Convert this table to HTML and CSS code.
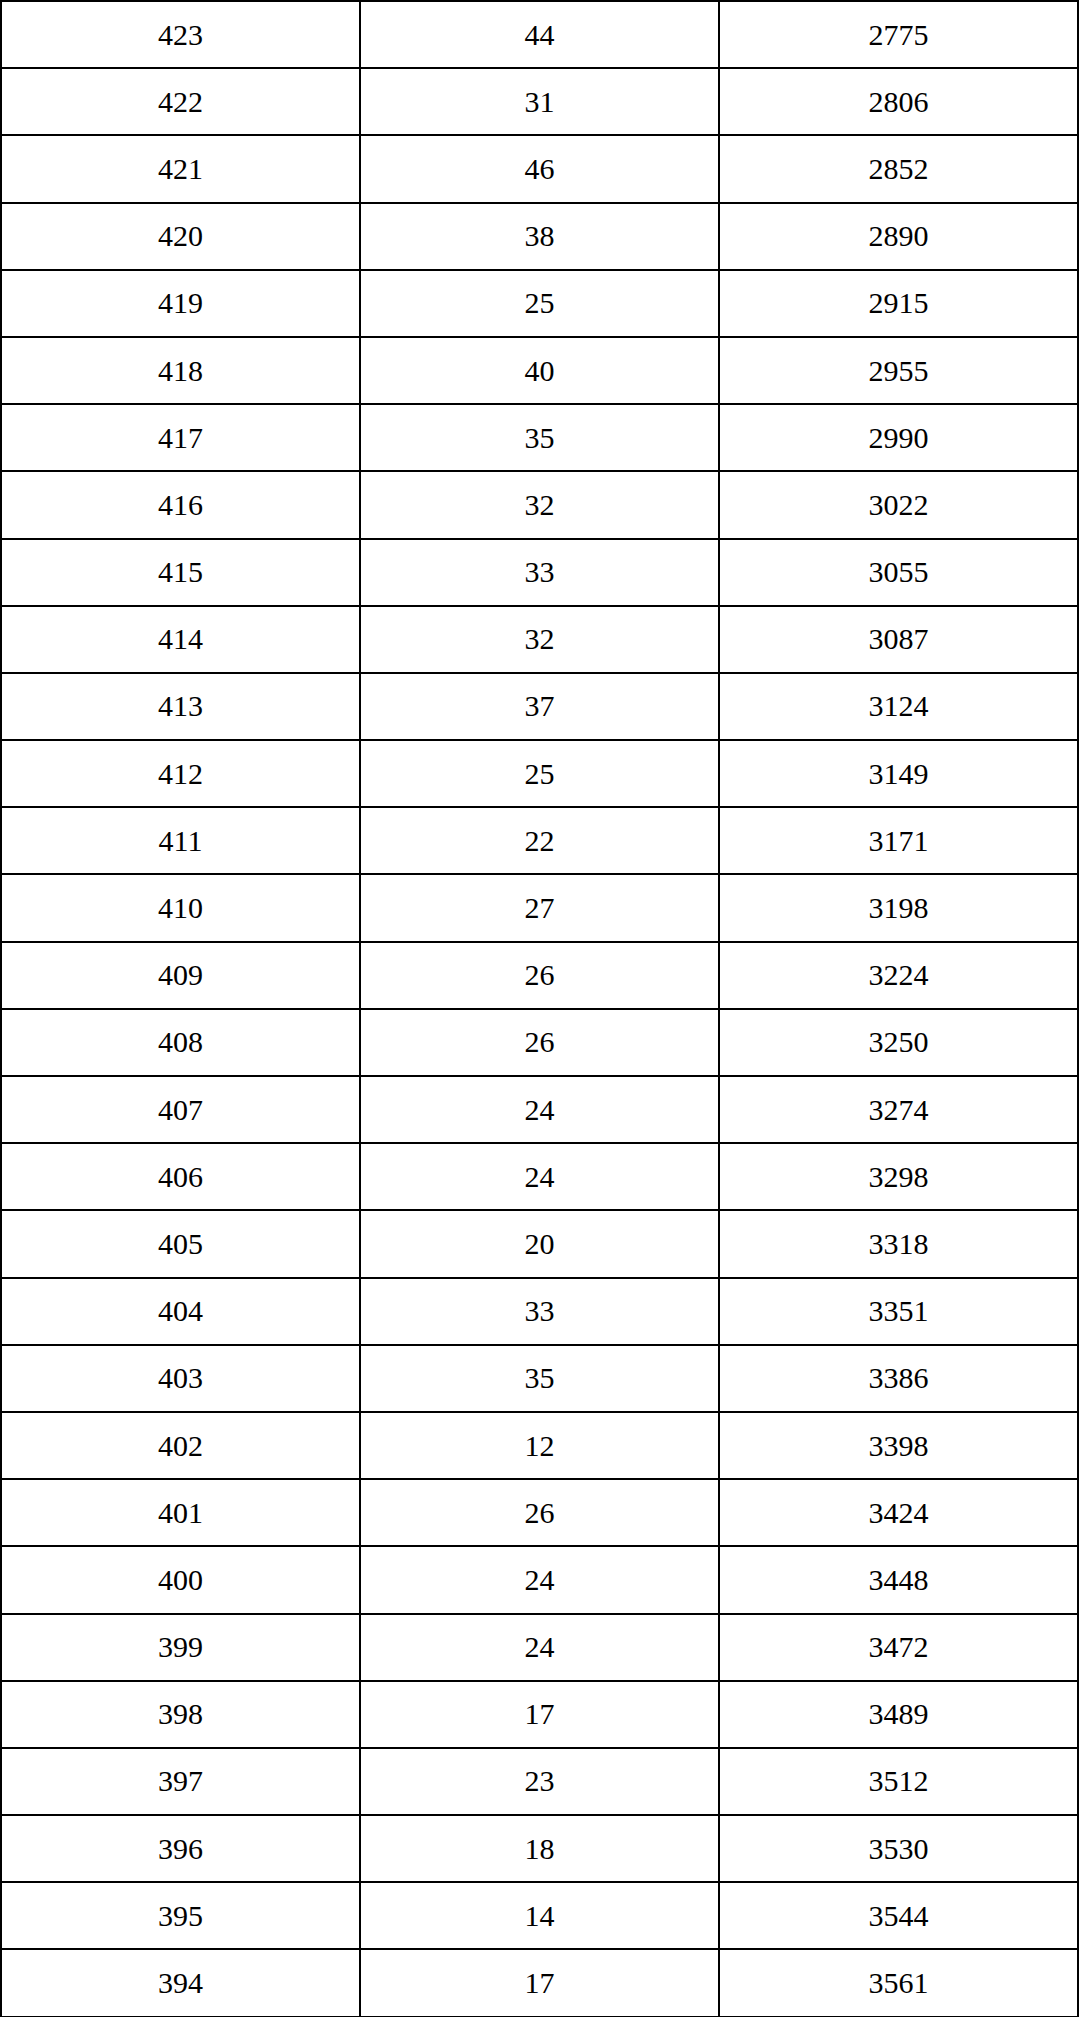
FILE: index.html
```html
<!DOCTYPE html>
<html>
<head>
<meta charset="utf-8">
<link rel="stylesheet" href="styles.css">
</head>
<body>
<table class="score-table">
<colgroup><col class="c"><col class="c"><col class="c"></colgroup>
<tbody>
<tr><td>423</td><td>44</td><td>2775</td></tr>
<tr><td>422</td><td>31</td><td>2806</td></tr>
<tr><td>421</td><td>46</td><td>2852</td></tr>
<tr><td>420</td><td>38</td><td>2890</td></tr>
<tr><td>419</td><td>25</td><td>2915</td></tr>
<tr><td>418</td><td>40</td><td>2955</td></tr>
<tr><td>417</td><td>35</td><td>2990</td></tr>
<tr><td>416</td><td>32</td><td>3022</td></tr>
<tr><td>415</td><td>33</td><td>3055</td></tr>
<tr><td>414</td><td>32</td><td>3087</td></tr>
<tr><td>413</td><td>37</td><td>3124</td></tr>
<tr><td>412</td><td>25</td><td>3149</td></tr>
<tr><td>411</td><td>22</td><td>3171</td></tr>
<tr><td>410</td><td>27</td><td>3198</td></tr>
<tr><td>409</td><td>26</td><td>3224</td></tr>
<tr><td>408</td><td>26</td><td>3250</td></tr>
<tr><td>407</td><td>24</td><td>3274</td></tr>
<tr><td>406</td><td>24</td><td>3298</td></tr>
<tr><td>405</td><td>20</td><td>3318</td></tr>
<tr><td>404</td><td>33</td><td>3351</td></tr>
<tr><td>403</td><td>35</td><td>3386</td></tr>
<tr><td>402</td><td>12</td><td>3398</td></tr>
<tr><td>401</td><td>26</td><td>3424</td></tr>
<tr><td>400</td><td>24</td><td>3448</td></tr>
<tr><td>399</td><td>24</td><td>3472</td></tr>
<tr><td>398</td><td>17</td><td>3489</td></tr>
<tr><td>397</td><td>23</td><td>3512</td></tr>
<tr><td>396</td><td>18</td><td>3530</td></tr>
<tr><td>395</td><td>14</td><td>3544</td></tr>
<tr><td>394</td><td>17</td><td>3561</td></tr>
</tbody>
</table>
</body>
</html>
```

FILE: styles.css
```css
html, body {
  margin: 0;
  padding: 0;
  background: #fff;
}
.score-table {
  width: 1079px;
  border-collapse: collapse;
  table-layout: fixed;
  font-family: "Liberation Serif", "Times New Roman", serif;
  font-size: 30px;
  color: #000;
}
.score-table .c {
  width: 33.333%;
}
.score-table tr {
  height: 67.2px;
}
.score-table td {
  border: 2px solid #000;
  text-align: center;
  vertical-align: middle;
  padding: 0;
  line-height: 1;
}
```
